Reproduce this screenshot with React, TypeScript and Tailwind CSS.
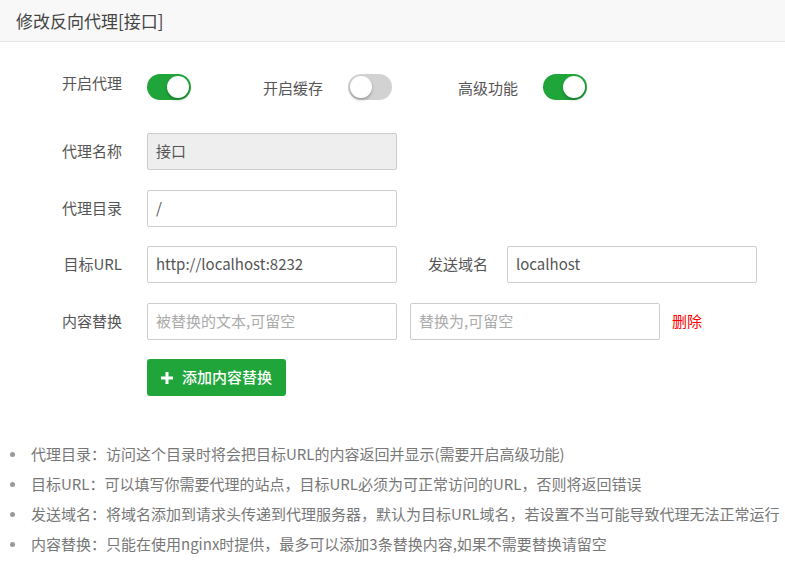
import React from "react";

const font = { fontFamily: '"Noto Sans CJK SC", "Noto Sans", sans-serif' };

function Toggle({ on }: { on: boolean }) {
  return (
    <div
      className={`relative h-[26px] w-[44px] shrink-0 rounded-full ${on ? "bg-[#20a53a]" : "bg-[#d2d2d2]"}`}
    >
      <div
        className={`absolute top-[2px] h-[22px] w-[22px] rounded-full bg-white shadow-[0_2px_3px_rgba(0,0,0,0.25)] ${on ? "right-[2px]" : "left-[2px]"}`}
      />
    </div>
  );
}

function Field({ value, placeholder, disabled, w = "w-[250px]" }: { value?: string; placeholder?: string; disabled?: boolean; w?: string }) {
  return (
    <div
      className={`flex h-[37px] ${w} shrink-0 items-center rounded-[2px] border border-[#ccc] px-[8px] text-[15px] ${disabled ? "bg-[#eee]" : "bg-white"}`}
    >
      {value ? <span className="text-[#555]">{value}</span> : <span className="text-[#aaa]">{placeholder}</span>}
    </div>
  );
}

function Label({ children }: { children: React.ReactNode }) {
  return <div className="w-[122px] shrink-0 text-right text-[15px] text-[#555]">{children}</div>;
}

const tips = [
  "代理目录：访问这个目录时将会把目标URL的内容返回并显示(需要开启高级功能)",
  "目标URL：可以填写你需要代理的站点，目标URL必须为可正常访问的URL，否则将返回错误",
  "发送域名：将域名添加到请求头传递到代理服务器，默认为目标URL域名，若设置不当可能导致代理无法正常运行",
  "内容替换：只能在使用nginx时提供，最多可以添加3条替换内容,如果不需要替换请留空",
];

export default function App() {
  return (
    <div className="h-[573px] w-[785px] overflow-hidden bg-white" style={font}>
      <div className="flex h-[42px] items-center border-b border-[#e5e5e5] bg-[#f8f8f8] pl-[16px] text-[17px] text-[#444]">
        修改反向代理[接口]
      </div>

      <div className="mt-[32px] flex items-start">
        <div className="-mt-[1px] w-[122px] shrink-0 text-right text-[15px] leading-[20px] text-[#555]">开启代理</div>
        <div className="ml-[25px]">
          <Toggle on />
        </div>
        <div className="ml-[72px] pt-[4px] text-[15px] leading-[20px] text-[#555]">开启缓存</div>
        <div className="ml-[25px]">
          <Toggle on={false} />
        </div>
        <div className="ml-[66px] pt-[4px] text-[15px] leading-[20px] text-[#555]">高级功能</div>
        <div className="ml-[25px]">
          <Toggle on />
        </div>
      </div>

      <div className="mt-[33px] flex flex-col gap-[19.5px]">
        <div className="flex items-center gap-[25px]">
          <Label>代理名称</Label>
          <Field value="接口" disabled />
        </div>
        <div className="flex items-center gap-[25px]">
          <Label>代理目录</Label>
          <Field value="/" />
        </div>
        <div className="flex items-center">
          <Label>目标URL</Label>
          <div className="ml-[25px]">
            <Field value="http://localhost:8232" />
          </div>
          <div className="ml-[31px] text-[15px] text-[#555]">发送域名</div>
          <div className="ml-[19px]">
            <Field value="localhost" />
          </div>
        </div>
        <div className="flex items-center">
          <Label>内容替换</Label>
          <div className="ml-[25px]">
            <Field placeholder="被替换的文本,可留空" />
          </div>
          <div className="ml-[13px]">
            <Field placeholder="替换为,可留空" />
          </div>
          <div className="ml-[12px] text-[15px] text-[#f00]">删除</div>
        </div>
        <div className="flex">
          <button className="ml-[147px] flex h-[37px] w-[139px] items-center rounded-[3px] bg-[#20a53a] pl-[14px] text-[15px] font-medium text-white">
            <svg width="12" height="12" viewBox="0 0 12 12" className="mr-[9px]">
              <path d="M4.5 0h3v4.5H12v3H7.5V12h-3V7.5H0v-3h4.5z" fill="#fff" />
            </svg>
            添加内容替换
          </button>
        </div>
      </div>

      <ul className="mt-[43px] flex flex-col">
        {tips.map((t) => (
          <li key={t} className="flex h-[30px] items-center text-[15px] text-[#777]">
            <span className="ml-[10px] mr-[16px] h-[5px] w-[5px] rounded-full bg-[#999]" />
            <span className="whitespace-nowrap">{t}</span>
          </li>
        ))}
      </ul>
    </div>
  );
}
